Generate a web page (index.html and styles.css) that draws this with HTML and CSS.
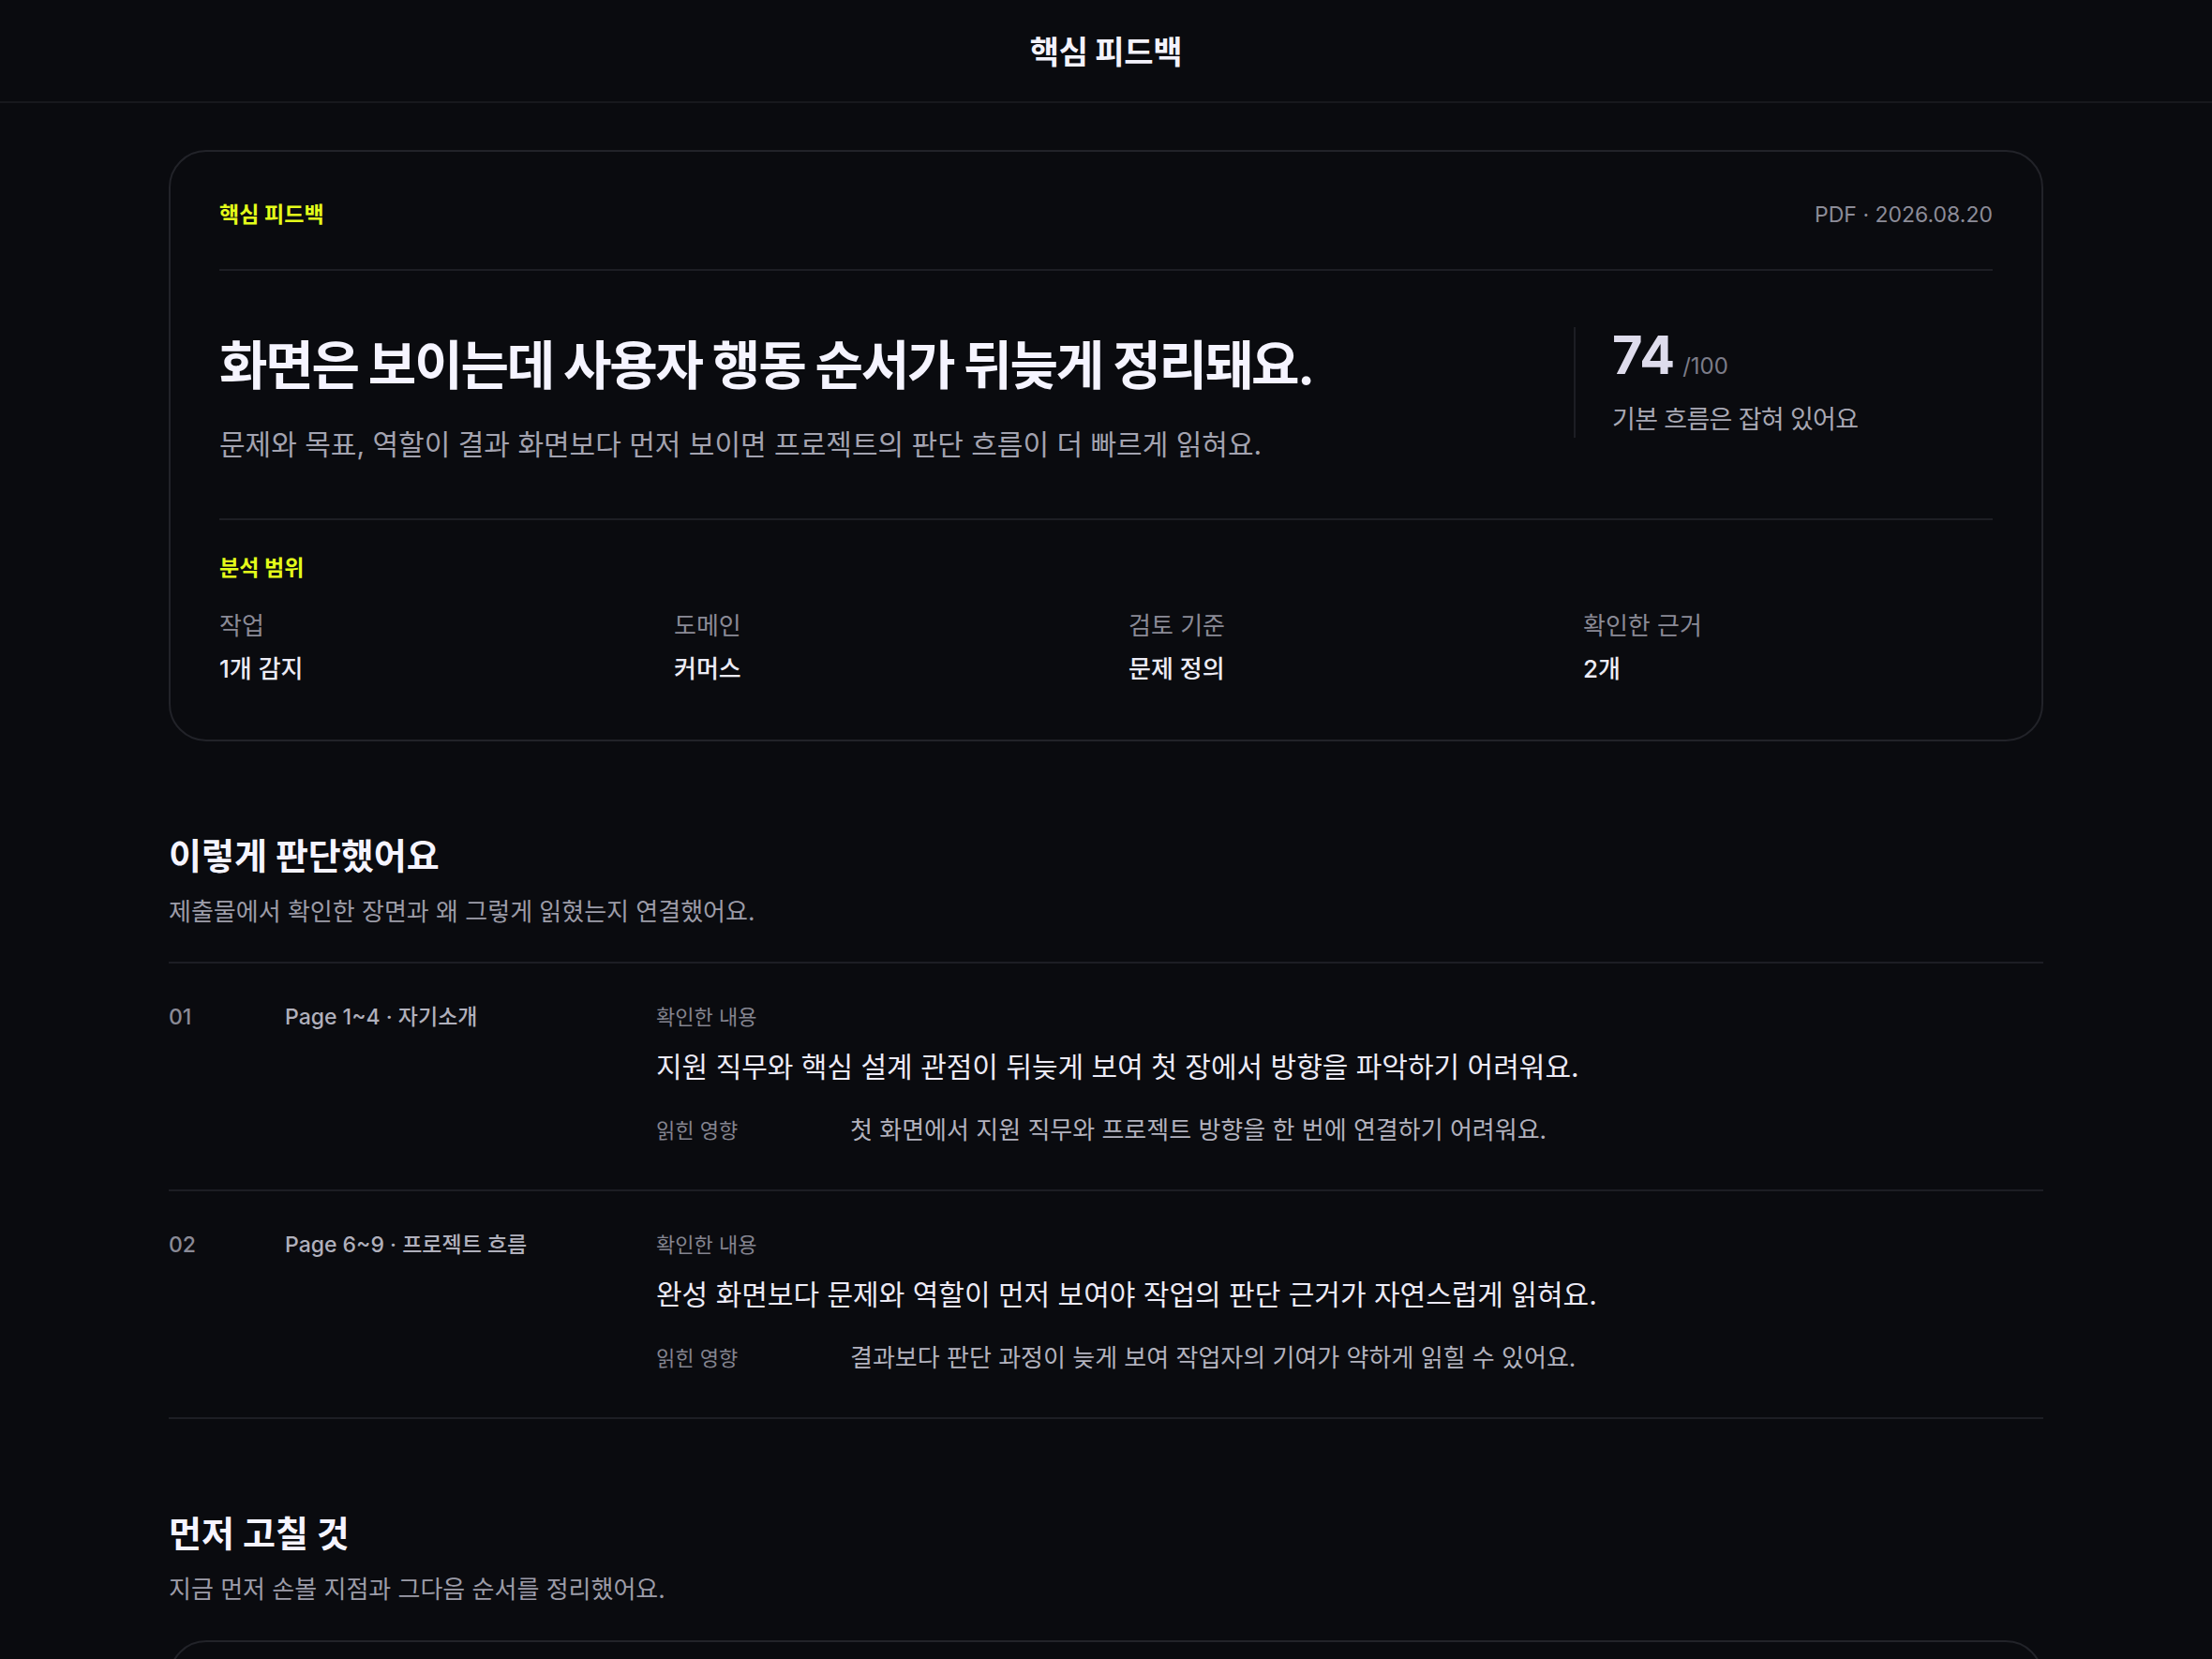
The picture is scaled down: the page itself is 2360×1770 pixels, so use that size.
FILE: index.html
```html
<!DOCTYPE html>
<html lang="ko">
<head>
  <meta charset="UTF-8">
  <meta name="viewport" content="width=device-width, initial-scale=1.0">
  <title>핵심 피드백</title>
  <link rel="stylesheet" href="styles.css">
</head>
<body>
  <header class="topbar">
    <h1>핵심 피드백</h1>
  </header>

  <main class="page">
    <!-- 요약 카드 -->
    <section class="summary-card">
      <div class="summary-head">
        <span class="eyebrow">핵심 피드백</span>
        <span class="meta">PDF · 2026.08.20</span>
      </div>

      <div class="summary-body">
        <div class="summary-text">
          <h2>화면은 보이는데 사용자 행동 순서가 뒤늦게 정리돼요.</h2>
          <p>문제와 목표, 역할이 결과 화면보다 먼저 보이면 프로젝트의 판단 흐름이 더 빠르게 읽혀요.</p>
        </div>
        <div class="score">
          <div class="score-num"><strong>74</strong><span>/100</span></div>
          <p>기본 흐름은 잡혀 있어요</p>
        </div>
      </div>

      <div class="scope">
        <span class="eyebrow">분석 범위</span>
        <dl class="scope-grid">
          <div><dt>작업</dt><dd>1개 감지</dd></div>
          <div><dt>도메인</dt><dd>커머스</dd></div>
          <div><dt>검토 기준</dt><dd>문제 정의</dd></div>
          <div><dt>확인한 근거</dt><dd>2개</dd></div>
        </dl>
      </div>
    </section>

    <!-- 판단 근거 -->
    <section class="block">
      <h3>이렇게 판단했어요</h3>
      <p class="block-desc">제출물에서 확인한 장면과 왜 그렇게 읽혔는지 연결했어요.</p>

      <ul class="evidence">
        <li class="evidence-row">
          <span class="num">01</span>
          <span class="page-ref">Page 1~4 · 자기소개</span>
          <div class="evidence-body">
            <span class="small-label">확인한 내용</span>
            <p class="finding">지원 직무와 핵심 설계 관점이 뒤늦게 보여 첫 장에서 방향을 파악하기 어려워요.</p>
            <div class="impact">
              <span class="small-label">읽힌 영향</span>
              <p>첫 화면에서 지원 직무와 프로젝트 방향을 한 번에 연결하기 어려워요.</p>
            </div>
          </div>
        </li>
        <li class="evidence-row">
          <span class="num">02</span>
          <span class="page-ref">Page 6~9 · 프로젝트 흐름</span>
          <div class="evidence-body">
            <span class="small-label">확인한 내용</span>
            <p class="finding">완성 화면보다 문제와 역할이 먼저 보여야 작업의 판단 근거가 자연스럽게 읽혀요.</p>
            <div class="impact">
              <span class="small-label">읽힌 영향</span>
              <p>결과보다 판단 과정이 늦게 보여 작업자의 기여가 약하게 읽힐 수 있어요.</p>
            </div>
          </div>
        </li>
      </ul>
    </section>

    <!-- 우선 수정 -->
    <section class="block">
      <h3>먼저 고칠 것</h3>
      <p class="block-desc">지금 먼저 손볼 지점과 그다음 순서를 정리했어요.</p>
      <div class="fix-card"></div>
    </section>
  </main>
</body>
</html>
```

FILE: styles.css
```css
* {
  box-sizing: border-box;
}
body {
  margin: 0;
  background: #0a0b0f;
  color: #f3f2fb;
  font-family: "Inter", "Noto Sans CJK KR", sans-serif;
}
h1, h2, h3, p, dl, dd, ul {
  margin: 0;
  padding: 0;
}
ul {
  list-style: none;
}

/* 상단 바 */
.topbar {
  height: 110px;
  display: flex;
  align-items: center;
  justify-content: center;
  border-bottom: 2px solid #17181d;
}
.topbar h1 {
  font-size: 34px;
  font-weight: 700;
  letter-spacing: -0.01em;
  margin-top: -2px;
}

.page {
  width: 2000px;
  margin: 50px auto 0;
  padding-bottom: 120px;
}

/* 요약 카드 */
.summary-card {
  border: 2px solid #222329;
  border-radius: 40px;
  padding: 50px 52px 58px;
}
.summary-head {
  display: flex;
  justify-content: space-between;
  align-items: center;
  padding-bottom: 41px;
  border-bottom: 2px solid #1d1e24;
}
.eyebrow {
  font-size: 23px;
  line-height: 34px;
  font-weight: 600;
  color: #e4ff1a;
}
.meta {
  font-size: 23px;
  color: #8c8c98;
}

.summary-body {
  display: flex;
  align-items: flex-start;
  padding: 60px 0 58px;
  border-bottom: 2px solid #1d1e24;
}
.summary-text {
  flex: 1;
  padding-top: 4px;
}
.summary-text h2 {
  font-size: 56px;
  line-height: 75px;
  font-weight: 700;
  letter-spacing: -0.04em;
  color: #f5f4ff;
}
.summary-text p {
  margin-top: 25px;
  font-size: 30px;
  line-height: 42px;
  color: #a3a3b0;
}
.score {
  flex: 0 0 447px;
  border-left: 2px solid #1d1e24;
  padding-left: 39px;
}
.score-num {
  display: flex;
  align-items: baseline;
  gap: 8px;
  line-height: 60px;
}
.score-num strong {
  font-size: 56px;
  font-weight: 700;
  color: #dedcec;
}
.score-num span {
  font-size: 24px;
  color: #7c7c88;
}
.score p {
  margin-top: 8px;
  font-size: 27px;
  line-height: 38px;
  letter-spacing: -0.025em;
  color: #a8a8b4;
}

.scope {
  padding-top: 34px;
}
.scope-grid {
  display: grid;
  grid-template-columns: repeat(4, 1fr);
  column-gap: 48px;
  margin-top: 28px;
}
.scope-grid dt {
  font-size: 26px;
  line-height: 34px;
  color: #8a8a96;
}
.scope-grid dd {
  margin-top: 12px;
  font-size: 26px;
  line-height: 34px;
  font-weight: 500;
  color: #ecebf5;
}

/* 섹션 */
.block {
  margin-top: 100px;
}
.block h3 {
  font-size: 38px;
  line-height: 44px;
  font-weight: 700;
  color: #f5f4ff;
}
.block-desc {
  margin-top: 19px;
  font-size: 26px;
  line-height: 38px;
  color: #9c9ca8;
}

.evidence {
  margin-top: 34px;
  border-bottom: 2px solid #1d1e24;
}
.evidence-row {
  display: grid;
  grid-template-columns: 124px 396px 1fr;
  padding: 42px 0 44px;
  border-top: 2px solid #1d1e24;
}
.num {
  font-size: 23px;
  line-height: 30px;
  font-weight: 500;
  color: #8a8a96;
}
.page-ref {
  font-size: 23px;
  line-height: 30px;
  font-weight: 500;
  color: #b0b0bc;
}
.small-label {
  display: block;
  font-size: 22px;
  line-height: 30px;
  color: #84848f;
}
.finding {
  margin-top: 17px;
  font-size: 30px;
  line-height: 42px;
  color: #eceaf6;
}
.impact {
  display: grid;
  grid-template-columns: 207px 1fr;
  align-items: center;
  margin-top: 28px;
}
.impact .small-label {
  line-height: 38px;
}
.impact p {
  font-size: 26px;
  line-height: 38px;
  color: #b2b2be;
}

.fix-card {
  margin-top: 35px;
  min-height: 300px;
  border: 2px solid #222329;
  border-radius: 40px;
}
```
